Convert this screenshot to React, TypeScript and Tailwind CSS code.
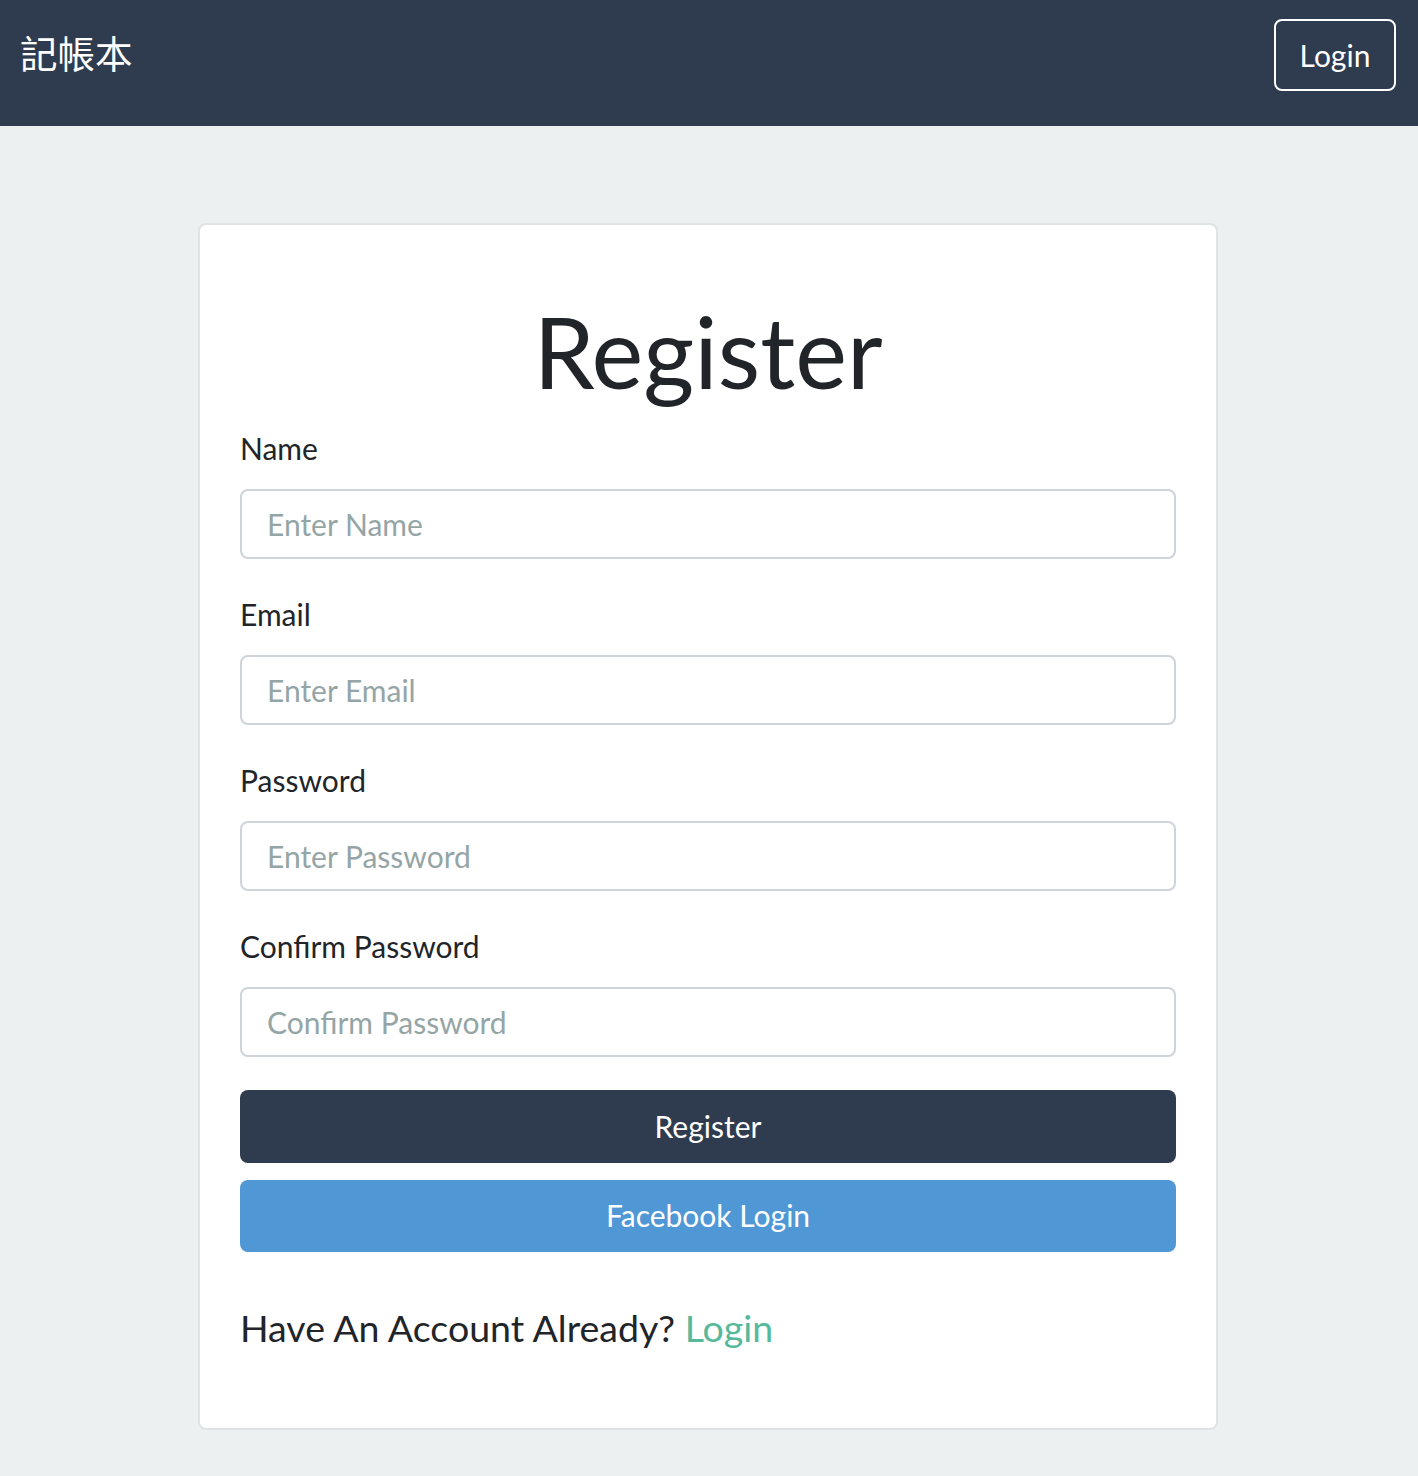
import React from 'react';

const fields = [
  { label: 'Name', placeholder: 'Enter Name', type: 'text' },
  { label: 'Email', placeholder: 'Enter Email', type: 'email' },
  { label: 'Password', placeholder: 'Enter Password', type: 'password' },
  { label: 'Confirm Password', placeholder: 'Confirm Password', type: 'password' },
];

const Navbar = () => (
  <nav className="h-[126px] bg-[#2f3c4f] pl-[20px] pr-[22px] pt-[19px]">
    <div className="flex h-[72px] items-center justify-between">
      <a
        href="#"
        className="mb-[6px] text-[37.5px] leading-none text-white"
        style={{ fontFamily: '"Noto Sans CJK TC", "Noto Sans CJK SC", sans-serif' }}
      >
        記帳本
      </a>
      <button className="flex h-[72px] w-[122px] items-center justify-center rounded-[8px] border-2 border-white text-[30px] text-white">
        Login
      </button>
    </div>
  </nav>
);

export default function App() {
  return (
    <div
      className="min-h-[1476px] bg-[#ecf0f1] text-[#212529]"
      style={{ fontFamily: 'Lato, "Open Sans", sans-serif' }}
    >
      <Navbar />
      <main className="flex justify-center pt-[97px]">
        <div className="mr-[2px] w-[1020px] rounded-[8px] border-2 border-[#dfe3e4] bg-white px-[40px] pt-[68px] pb-[78px]">
          <h1 className="text-center text-[98px] leading-[1.2]">Register</h1>
          <form className="mt-[15px]" onSubmit={(e) => e.preventDefault()}>
            {fields.map((f) => (
              <div key={f.label} className="mb-[33px]">
                <label className="block text-[30px] leading-[45px]">{f.label}</label>
                <input
                  type={f.type}
                  placeholder={f.placeholder}
                  className="mt-[18px] block h-[70px] w-full rounded-[8px] border-2 border-[#ced4da] px-[25px] text-[30px] placeholder:text-[#95a5a6] focus:outline-none"
                />
              </div>
            ))}
            <button className="block h-[73px] w-full rounded-[8px] bg-[#2f3c4f] text-[30px] text-white">
              Register
            </button>
            <button className="mt-[17px] block h-[72px] w-full rounded-[8px] bg-[#5097d5] text-[30px] text-white">
              Facebook Login
            </button>
          </form>
          <p className="mt-[53px] text-[37.5px] leading-[1.2]">
            Have An Account Already?{' '}
            <a href="#" className="text-[#56b99b]">
              Login
            </a>
          </p>
        </div>
      </main>
    </div>
  );
}
